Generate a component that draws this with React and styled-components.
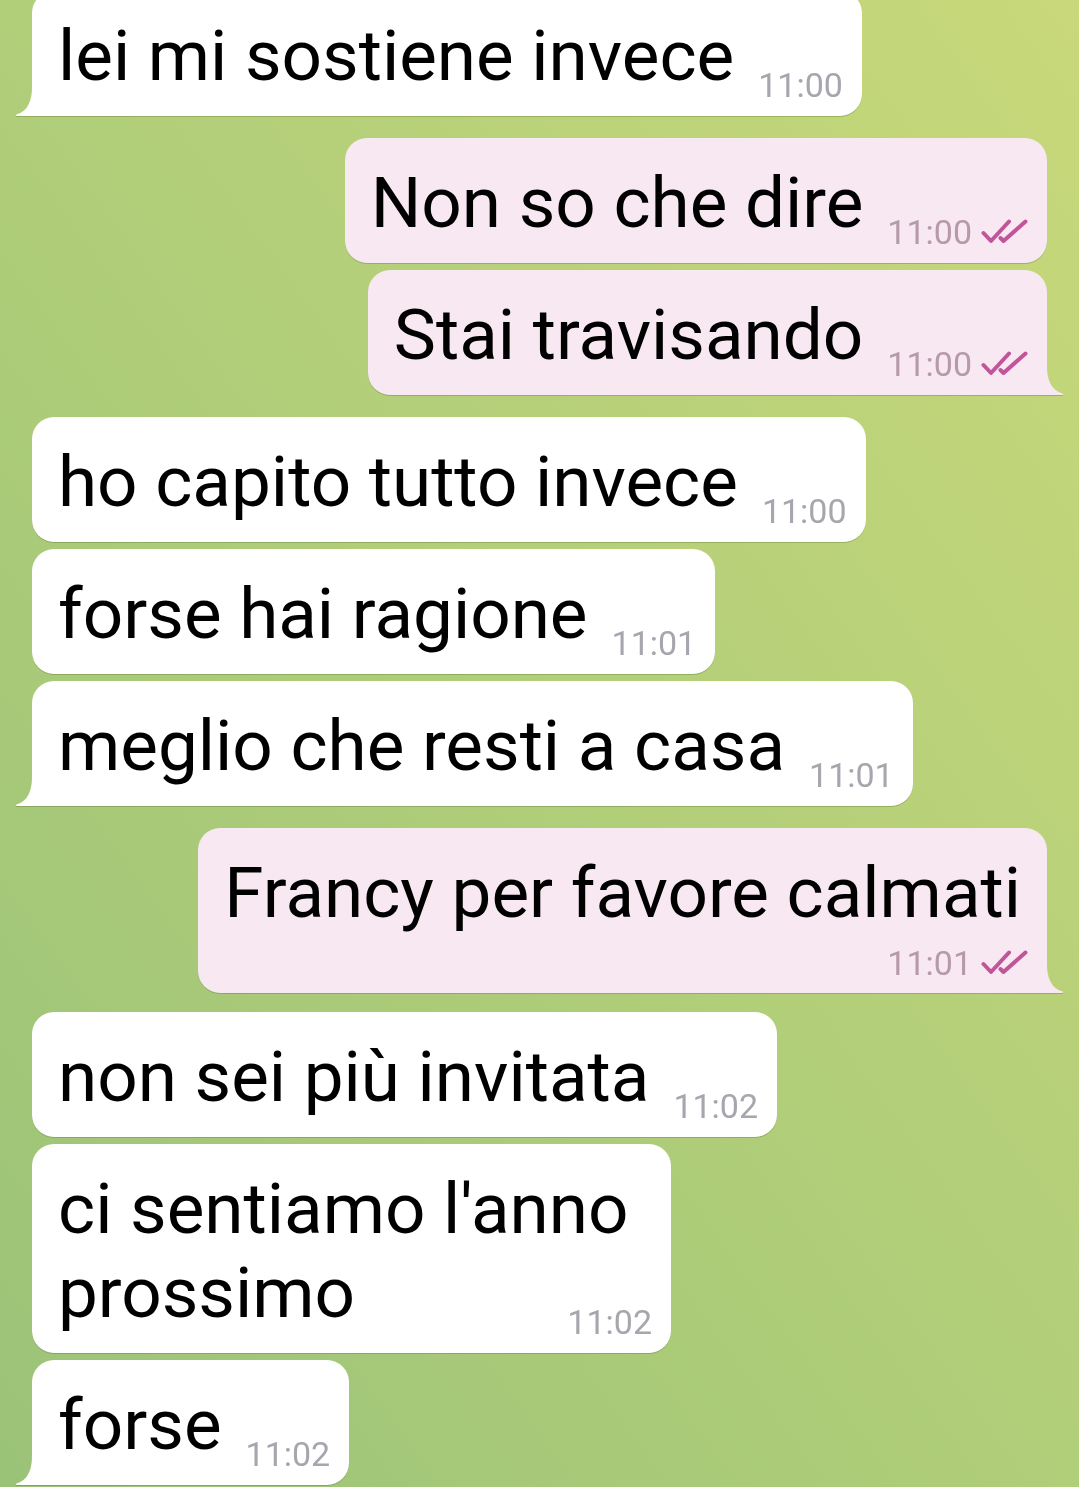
import React from "react";
import styled, { createGlobalStyle } from "styled-components";

const GlobalStyle = createGlobalStyle`
  html, body {
    margin: 0;
    padding: 0;
  }
  body {
    font-family: Roboto, "Noto Sans", "Liberation Sans", sans-serif;
    background: #b1ce79;
  }
`;

const messages = [
  { id: 1, out: false, text: "lei mi sostiene invece", time: "11:00", first: true, tail: true },
  { id: 2, out: true, text: "Non so che dire", time: "11:00", first: true },
  { id: 3, out: true, text: "Stai travisando", time: "11:00", tail: true },
  { id: 4, out: false, text: "ho capito tutto invece", time: "11:00", first: true },
  { id: 5, out: false, text: "forse hai ragione", time: "11:01" },
  { id: 6, out: false, text: "meglio che resti a casa", time: "11:01", tail: true },
  { id: 7, out: true, text: "Francy per favore calmati", time: "11:01", first: true, tail: true, stacked: true },
  { id: 8, out: false, text: "non sei più invitata", time: "11:02", first: true, gap: 19 },
  { id: 9, out: false, text: "ci sentiamo l'anno\nprossimo", time: "11:02", minWidth: 639 },
  { id: 10, out: false, text: "forse", time: "11:02", tail: true },
];

const Chat = styled.main`
  min-height: 1487px;
  overflow: hidden;
  background: linear-gradient(to bottom left, #c8d87a 0%, #b1ce79 50%, #9bc378 100%);
`;

const List = styled.div`
  display: flex;
  flex-direction: column;
  margin-top: -9px;
`;

const Row = styled.div`
  display: flex;
  justify-content: ${(p) => (p.$out ? "flex-end" : "flex-start")};
  padding: 0 32px;
  margin-top: ${(p) => p.$gap}px;
`;

const Bubble = styled.div`
  position: relative;
  max-width: 900px;
  min-width: ${(p) => p.$minWidth || 0}px;
  box-sizing: border-box;
  padding: 23px ${(p) => (p.$stacked ? 26 : 19)}px 18px 26px;
  background: ${(p) => (p.$out ? "#f8e8f1" : "#ffffff")};
  border-radius: 22px;
  ${(p) => p.$tail && (p.$out ? "border-bottom-right-radius: 0;" : "border-bottom-left-radius: 0;")}
  filter: drop-shadow(0 1.5px 0.5px rgba(60, 90, 30, 0.28));
  color: #000;
  font-size: 71px;
  line-height: 84px;
`;

const Text = styled.span`
  white-space: pre-line;
`;

const Meta = styled.span`
  display: flex;
  align-items: center;
  justify-content: flex-end;
  font-size: 34px;
  line-height: 40px;
  color: ${(p) => (p.$out ? "#b69aaa" : "#a6a6ae")};
  ${(p) =>
    p.$stacked
      ? `
    margin: 8px -7px -8px 0;
  `
      : `
    float: right;
    margin: 51px 0 -8px 24px;
  `}
`;

const Checks = styled.svg`
  width: 47px;
  height: 26px;
  margin-left: 9px;
`;

const Tail = styled.svg`
  position: absolute;
  bottom: 0;
  width: 18px;
  height: 30px;
  ${(p) => (p.$out ? "right: -17px; transform: scaleX(-1);" : "left: -17px;")}
`;

const DoubleCheck = () => (
  <Checks viewBox="0 0 47 26" fill="none" stroke="#c0559a" strokeWidth="4" strokeLinecap="round" strokeLinejoin="round">
    <path d="M2.5 14 L10 22 L28 2.5" />
    <path d="M19.5 19 L22.5 22 L44.5 2.5" />
  </Checks>
);

const BubbleTail = ({ out }) => (
  <Tail $out={out} viewBox="0 0 18 30">
    <path
      d="M18 0 L17 0 C17 15 13 25 1.5 28.6 C0.4 29 0.7 30 2 30 L18 30 Z"
      fill={out ? "#f8e8f1" : "#ffffff"}
    />
  </Tail>
);

const Message = ({ msg, index }) => {
  const gap = index === 0 ? 0 : msg.gap || (msg.first ? 22 : 7);
  return (
    <Row $out={msg.out} $gap={gap}>
      <Bubble $out={msg.out} $tail={msg.tail} $stacked={msg.stacked} $minWidth={msg.minWidth}>
        <Text>{msg.text}</Text>
        <Meta $out={msg.out} $stacked={msg.stacked}>
          {msg.time}
          {msg.out && <DoubleCheck />}
        </Meta>
        {msg.tail && <BubbleTail out={msg.out} />}
      </Bubble>
    </Row>
  );
};

export default function App() {
  return (
    <>
      <GlobalStyle />
      <Chat>
        <List>
          {messages.map((m, i) => (
            <Message key={m.id} msg={m} index={i} />
          ))}
        </List>
      </Chat>
    </>
  );
}
